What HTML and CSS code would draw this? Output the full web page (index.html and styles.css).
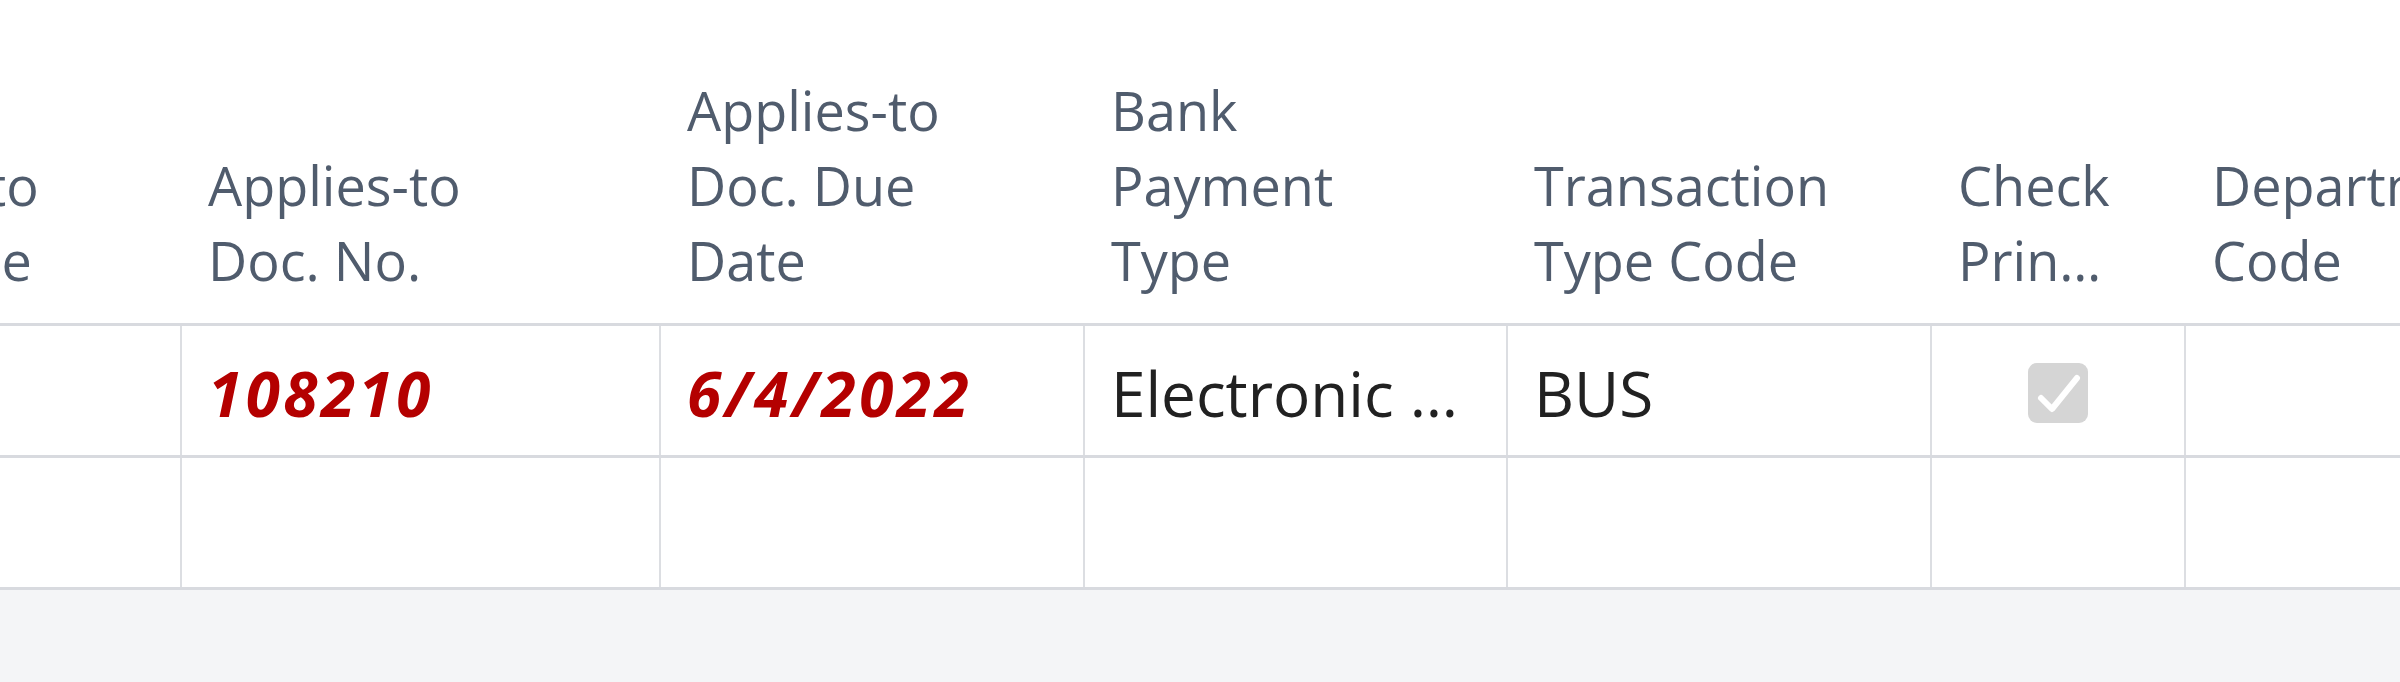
FILE: index.html
```html
<!DOCTYPE html>
<html lang="en">

<head>
    <meta charset="UTF-8">
    <meta name="viewport" content="width=device-width, initial-scale=1.0">
    <title>Payment Journal Lines</title>
    <link rel="stylesheet" href="styles.css">
</head>

<body>
    <div class="page">
        <div class="lines">
            <div class="row head">
                <div class="cell"><span class="label">Applies-to Doc. Type</span></div>
                <div class="cell"><span class="label">Applies-to Doc. No.</span></div>
                <div class="cell"><span class="label">Applies-to Doc. Due Date</span></div>
                <div class="cell"><span class="label">Bank Payment Type</span></div>
                <div class="cell"><span class="label">Transaction Type Code</span></div>
                <div class="cell narrow"><span class="label clamp2">Check Printed</span></div>
                <div class="cell"><span class="label">Department Code</span></div>
            </div>
            <div class="row">
                <div class="cell"></div>
                <div class="cell"><span class="value overdue">108210</span></div>
                <div class="cell"><span class="value overdue">6/4/2022</span></div>
                <div class="cell"><span class="value">Electronic Payment</span></div>
                <div class="cell"><span class="value">BUS</span></div>
                <div class="cell center">
                    <span class="checkbox">
                        <svg viewBox="0 0 60 60" width="60" height="60">
                            <path d="M13 35 L24 46 L49 15" fill="none" stroke="#fff" stroke-width="6"
                                stroke-linecap="round" stroke-linejoin="round" />
                        </svg>
                    </span>
                </div>
                <div class="cell"></div>
            </div>
            <div class="row">
                <div class="cell"></div>
                <div class="cell"></div>
                <div class="cell"></div>
                <div class="cell"></div>
                <div class="cell"></div>
                <div class="cell"></div>
                <div class="cell"></div>
            </div>
        </div>
        <div class="filler"></div>
    </div>
</body>

</html>
```

FILE: styles.css
```css
body {
    font-family: "Segoe UI", "Open Sans", sans-serif;
    background-color: #fff;
    margin: 0;
    padding: 0;
}

.page {
    height: 100vh;
    display: flex;
    flex-direction: column;
    overflow: hidden;
}

.lines {
    margin-left: -240px;
    background-color: #fff;
}

.row {
    display: grid;
    grid-template-columns: 422px 479px 424px 423px 424px 254px 300px;
    height: 132px;
    box-sizing: border-box;
    border-bottom: 3px solid #d8dadf;
}

.cell {
    display: flex;
    align-items: center;
    min-width: 0;
    padding: 4px 26px 0 26px;
    border-right: 2px solid #dcdee2;
    overflow: hidden;
}

.cell.center {
    justify-content: center;
}

/* header row: labels sit on the bottom edge */
.row.head {
    height: 326px;
}

.head .cell {
    align-items: flex-end;
    padding: 0 86px 25px 26px;
    border-right: 0;
}

.head .cell.narrow {
    padding-right: 74px;
}

.label {
    font-size: 54px;
    line-height: 75px;
    color: #505c6d;
}

.clamp2 {
    display: -webkit-box;
    -webkit-line-clamp: 2;
    -webkit-box-orient: vertical;
    overflow: hidden;
    overflow-wrap: anywhere;
}

.value {
    font-size: 62px;
    color: #212121;
    white-space: nowrap;
    overflow: hidden;
    text-overflow: ellipsis;
}

.overdue {
    color: #b40000;
    font-weight: bold;
    font-style: italic;
    letter-spacing: 3.5px;
}

.checkbox {
    display: block;
    width: 60px;
    height: 60px;
    border-radius: 9px;
    background-color: #d5d5d5;
}

.checkbox svg {
    display: block;
}

.filler {
    flex: 1;
    background-color: #f4f5f7;
}
```
